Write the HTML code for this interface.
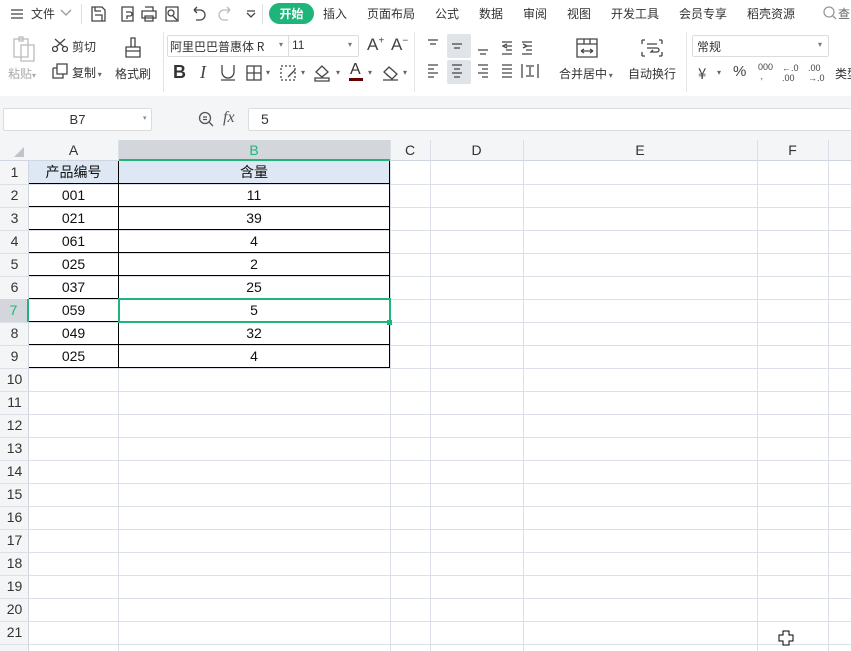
<!DOCTYPE html><html><head><meta charset="utf-8"><style>
*{margin:0;padding:0;box-sizing:border-box}
body{width:851px;height:651px;overflow:hidden;background:#fff;font-family:"Liberation Sans","Noto Sans CJK SC",sans-serif;font-size:12px;color:#333;position:relative}
.a{position:absolute;white-space:nowrap}
.cjk{font-family:"Noto Sans CJK SC",sans-serif}
.ic{position:absolute;stroke:#444;fill:none;stroke-width:1.3}
.gl{position:absolute;background:#dadfe8}
.cell{position:absolute;text-align:center;font-size:14px;color:#111;line-height:23px}
.rh{position:absolute;left:0;width:29px;text-align:center;font-size:14px;color:#333;line-height:23px}
</style></head><body>
<!-- tab bar -->
<div class="a" style="left:0;top:0;width:851px;height:28px;background:#fff"></div>
<svg class="ic" style="left:10px;top:7px" width="14" height="14"><path d="M1 3h12M1 7h12M1 11h12"/></svg>
<div class="a cjk" style="left:31px;top:5px;font-size:12px">文件</div>
<svg class="ic" style="left:60px;top:9px;stroke:#999" width="12" height="8"><path d="M1 1l5 5 5-5"/></svg>
<div class="a" style="left:81px;top:4px;width:1px;height:20px;background:#ddd"></div>
<svg class="ic" style="left:90px;top:5px" width="170" height="18"><path d="M2 2h10l3 3v11H2z M5 10h7v6M5 2v4h6"/><path d="M32 2h11v14H32z M36 7h4a2 2 0 0 1 0 4h-3v3"/><path d="M52 6h14v7H52zM55 2h8v4M55 11h8v5h-8z"/><path d="M76 2h12v14H76zM83 11l4 4"/><circle cx="81" cy="8" r="3"/><path d="M104 5h6a5 5 0 0 1 0 10h-4M104 5l3-3M104 5l3 3"/><path style="stroke:#bbb" d="M140 5h-6a5 5 0 0 0 0 10h4M140 5l-3-3M140 5l-3 3"/><path d="M157 8l4 4 4-4M157 6h8"/></svg>
<div class="a" style="left:262px;top:4px;width:1px;height:20px;background:#ddd"></div>
<div class="a cjk" style="left:269px;top:3px;width:45px;height:21px;border-radius:11px;background:#1fb57a;color:#fff;font-size:12px;text-align:center;line-height:21px;font-weight:bold">开始</div>
<div class="a cjk" style="left:323px;top:5px;font-size:12px;word-spacing:0">插入</div>
<div class="a cjk" style="left:367px;top:5px">页面布局</div>
<div class="a cjk" style="left:435px;top:5px">公式</div>
<div class="a cjk" style="left:479px;top:5px">数据</div>
<div class="a cjk" style="left:523px;top:5px">审阅</div>
<div class="a cjk" style="left:567px;top:5px">视图</div>
<div class="a cjk" style="left:611px;top:5px">开发工具</div>
<div class="a cjk" style="left:679px;top:5px">会员专享</div>
<div class="a cjk" style="left:747px;top:5px">稻壳资源</div>
<svg class="ic" style="left:823px;top:6px;stroke:#999" width="14" height="14"><circle cx="6" cy="6" r="5"/><path d="M10 10l3 3"/></svg>
<div class="a cjk" style="left:838px;top:5px;color:#666">查</div>
<!-- ribbon -->
<svg class="ic" style="left:12px;top:36px;stroke:#bbb" width="24" height="26"><path d="M2 3h14v18H2zM7 1h4v4H7zM9 9h13v16H9z"/></svg>
<div class="a cjk" style="left:8px;top:65px;color:#aaa">粘贴<span style="font-size:8px">▾</span></div>
<svg class="ic" style="left:52px;top:38px" width="16" height="14"><circle cx="3" cy="11" r="2.5"/><circle cx="13" cy="11" r="2.5"/><path d="M4 9L13 1M12 9L3 1"/></svg>
<div class="a cjk" style="left:72px;top:38px">剪切</div>
<svg class="ic" style="left:52px;top:63px" width="16" height="16"><path d="M5 1h10v10H5zM1 5h4M1 5v10h10v-4"/></svg>
<div class="a cjk" style="left:72px;top:64px">复制<span style="font-size:8px;color:#666"> ▾</span></div>
<svg class="ic" style="left:122px;top:36px" width="22" height="26"><path d="M9 2h4v9H9zM4 11h14v10H4zM4 15h14"/></svg>
<div class="a cjk" style="left:115px;top:65px">格式刷</div>
<div class="a" style="left:163px;top:32px;width:1px;height:60px;background:#e4e4e4"></div>
<div class="a" style="left:167px;top:35px;width:192px;height:22px;border:1px solid #dcdcdc;border-radius:2px"></div>
<div class="a" style="left:288px;top:36px;width:1px;height:20px;background:#dcdcdc"></div>
<div class="a cjk" style="left:170px;top:38px;font-size:12px">阿里巴巴普惠体 R</div>
<div class="a" style="left:279px;top:40px;font-size:8px;color:#777">▾</div>
<div class="a" style="left:292px;top:38px">11</div>
<div class="a" style="left:348px;top:40px;font-size:8px;color:#777">▾</div>
<div class="a" style="left:367px;top:35px;font-size:17px;color:#444">A<sup style="font-size:10px">+</sup></div>
<div class="a" style="left:391px;top:35px;font-size:17px;color:#444">A<sup style="font-size:10px">−</sup></div>
<div class="a" style="left:173px;top:62px;font-size:18px;font-weight:bold;color:#333">B</div>
<div class="a" style="left:200px;top:62px;font-size:18px;font-style:italic;font-family:'Liberation Serif';color:#444">I</div>
<svg class="ic" style="left:220px;top:64px" width="16" height="18"><path d="M2 1v7a6 6 0 0 0 12 0V1M1 16h14"/></svg>
<svg class="ic" style="left:246px;top:65px" width="16" height="16"><path d="M1 1h14v14H1zM8 1v14M1 8h14"/></svg>
<div class="a" style="left:266px;top:68px;font-size:8px;color:#666">▾</div>
<svg class="ic" style="left:280px;top:65px" width="18" height="16"><path d="M1 1h14v14H1z" stroke-dasharray="2 2"/><path d="M8 12l7-7"/></svg>
<div class="a" style="left:301px;top:68px;font-size:8px;color:#666">▾</div>
<svg class="ic" style="left:313px;top:64px" width="18" height="18"><path d="M3 8l6-6 6 6-6 5zM2 14h14v3H2z"/></svg>
<div class="a" style="left:336px;top:68px;font-size:8px;color:#666">▾</div>
<div class="a" style="left:350px;top:61px;font-size:16px;color:#333">A</div>
<div class="a" style="left:349px;top:78px;width:14px;height:3px;background:#600"></div>
<div class="a" style="left:368px;top:68px;font-size:8px;color:#666">▾</div>
<svg class="ic" style="left:382px;top:65px" width="18" height="16"><path d="M7 2l8 7-5 5-8-7zM4 9l6 5M1 15h15"/></svg>
<div class="a" style="left:403px;top:68px;font-size:8px;color:#666">▾</div>
<div class="a" style="left:414px;top:32px;width:1px;height:60px;background:#e4e4e4"></div>
<div class="a" style="left:447px;top:34px;width:24px;height:24px;background:#e0e3e8;border-radius:2px"></div>
<div class="a" style="left:447px;top:60px;width:24px;height:24px;background:#e0e3e8;border-radius:2px"></div>
<svg class="ic" style="left:426px;top:38px;stroke:#444" width="120" height="44" stroke-width="1"><path d="M2 2h10M4 6h6"/><path d="M26 6h10M28 10h6"/><path d="M52 12h10M54 16h6"/><path d="M76 4h10M80 8h6M80 12h6M76 16h10M81 6l-4 2 4 2"/><path d="M96 4h10M100 8h6M100 12h6M96 16h10M97 6l4 2-4 2"/><path d="M2 27h10M2 31h6M2 35h10M2 39h6"/><path d="M26 27h10M28 31h6M26 35h10M28 39h6"/><path d="M52 27h10M56 31h6M52 35h10M56 39h6"/><path d="M76 27h10M76 31h10M76 35h10M76 39h10"/><path d="M96 26v14M112 26v14M100 28h8M100 38h8M104 29v8"/></svg>
<svg class="ic" style="left:576px;top:38px" width="22" height="20"><path d="M1 1h20v18H1zM1 6h20M8 1v5M14 1v5M5 13h12M5 13l3-2M5 13l3 2M17 13l-3-2M17 13l-3 2"/></svg>
<div class="a cjk" style="left:559px;top:65px">合并居中<span style="font-size:8px;color:#666"> ▾</span></div>
<svg class="ic" style="left:641px;top:38px" width="22" height="20"><path d="M1 2h3M1 2v4M21 2h-3M21 2v4M1 18h3M1 18v-4M21 18h-3M21 18v-4M6 6h10M6 10h10a2 2 0 0 1 0 4h-6l2-2"/></svg>
<div class="a cjk" style="left:628px;top:65px">自动换行</div>
<div class="a" style="left:686px;top:32px;width:1px;height:60px;background:#e4e4e4"></div>
<div class="a" style="left:692px;top:35px;width:137px;height:22px;border:1px solid #dcdcdc;border-radius:2px"></div>
<div class="a cjk" style="left:697px;top:38px">常规</div>
<div class="a" style="left:818px;top:40px;font-size:8px;color:#777">▾</div>
<div class="a cjk" style="left:698px;top:63px;font-size:15px;color:#444">¥</div>
<div class="a" style="left:717px;top:68px;font-size:8px;color:#666">▾</div>
<div class="a" style="left:733px;top:63px;font-size:15px;color:#444">%</div>
<div class="a" style="left:758px;top:63px;font-size:9px;color:#444;line-height:9px">000<br>&nbsp;,</div>
<div class="a" style="left:782px;top:63px;font-size:9px;color:#444;line-height:10px">←.0<br>.00</div>
<div class="a" style="left:808px;top:63px;font-size:9px;color:#444;line-height:10px">.00<br>→.0</div>
<div class="a cjk" style="left:835px;top:65px">类型</div>
<!-- gray band & formula bar -->
<div class="a" style="left:0;top:96px;width:851px;height:44px;background:#f3f5f7"></div>
<div class="a" style="left:3px;top:108px;width:149px;height:23px;background:#fff;border:1px solid #dcdcdc;border-radius:2px;text-align:center;line-height:21px;font-size:13px">B7</div>
<div class="a" style="left:143px;top:114px;font-size:7px;color:#888">▾</div>
<svg class="ic" style="left:198px;top:111px;stroke:#555" width="18" height="18"><circle cx="7" cy="7" r="5.5"/><path d="M5 6h4M5 8.5h4M11 11l4 4"/></svg>
<div class="a" style="left:223px;top:109px;font-size:16px;font-style:italic;font-family:'Liberation Serif';color:#555">fx</div>
<div class="a" style="left:248px;top:108px;width:610px;height:23px;background:#fff;border:1px solid #dcdcdc;border-radius:2px;padding-left:12px;line-height:21px;font-size:14px">5</div>
<!-- headers -->
<div class="a" style="left:0;top:140px;width:851px;height:21px;background:#f3f5f7;border-bottom:1px solid #d0d6df"></div>
<div class="a" style="left:0;top:161px;width:29px;height:490px;background:#f3f5f7;border-right:1px solid #d0d6df"></div>
<svg class="a" style="left:13px;top:146px" width="12" height="12"><path d="M11 1v10H1z" fill="#c0c4ca"/></svg>
<div class="a" style="left:118px;top:140px;width:272px;height:21px;background:#d3d6db;border-bottom:2px solid #1fb57a"></div>
<div id="g"></div>
<svg class="a" style="left:778px;top:630px" width="16" height="16"><path d="M5 1h6v4h4v6h-4v4H5v-4H1V5h4z" fill="#fff" stroke="#000"/></svg>
<script>
var cols=[29,118,390,430,523,757,828,851],names=['A','B','C','D','E','F','G'];
var h='';
for(var i=0;i<6;i++){var x=cols[i],w=cols[i+1]-x;h+='<div class="a" style="left:'+x+'px;top:140px;width:'+w+'px;text-align:center;line-height:21px;font-size:14px;color:'+(i==1?'#1fb57a':'#333')+'">'+names[i]+'</div>';}
for(var i=1;i<cols.length-1;i++){h+='<div class="gl" style="left:'+cols[i]+'px;top:140px;width:1px;height:511px"></div>';}
for(var r=1;r<=21;r++){var y=161+(r-1)*23;h+='<div class="gl" style="left:0;top:'+(y+23)+'px;width:851px;height:1px"></div>';
h+='<div class="rh" style="top:'+y+'px;'+(r==7?'background:#d3d6db;color:#1fb57a;border-right:2px solid #1fb57a':'')+'">'+r+'</div>';}
h+='<div class="a" style="left:29px;top:161px;width:361px;height:23px;background:#dde8f4"></div>';
var d=[['产品编号','含量'],['001','11'],['021','39'],['061','4'],['025','2'],['037','25'],['059','5'],['049','32'],['025','4']];
for(var r=0;r<9;r++){var y=161+r*23;h+='<div class="cell cjk" style="left:29px;top:'+y+'px;width:89px;'+(r?'font-family:Liberation Sans':'')+'">'+d[r][0]+'</div><div class="cell cjk" style="left:118px;top:'+y+'px;width:272px;'+(r?'font-family:Liberation Sans':'')+'">'+d[r][1]+'</div>';
h+='<div class="a" style="left:29px;top:'+(y+22)+'px;width:361px;height:1px;background:#000"></div>';}
h+='<div class="a" style="left:118px;top:161px;width:1px;height:207px;background:#000"></div><div class="a" style="left:389px;top:161px;width:1px;height:207px;background:#000"></div>';
h+='<div class="a" style="left:118px;top:298px;width:273px;height:25px;border:2px solid #1fb57a"></div><div class="a" style="left:387px;top:320px;width:5px;height:5px;background:#1fb57a"></div>';
document.getElementById('g').innerHTML=h;
</script>
</body></html>
